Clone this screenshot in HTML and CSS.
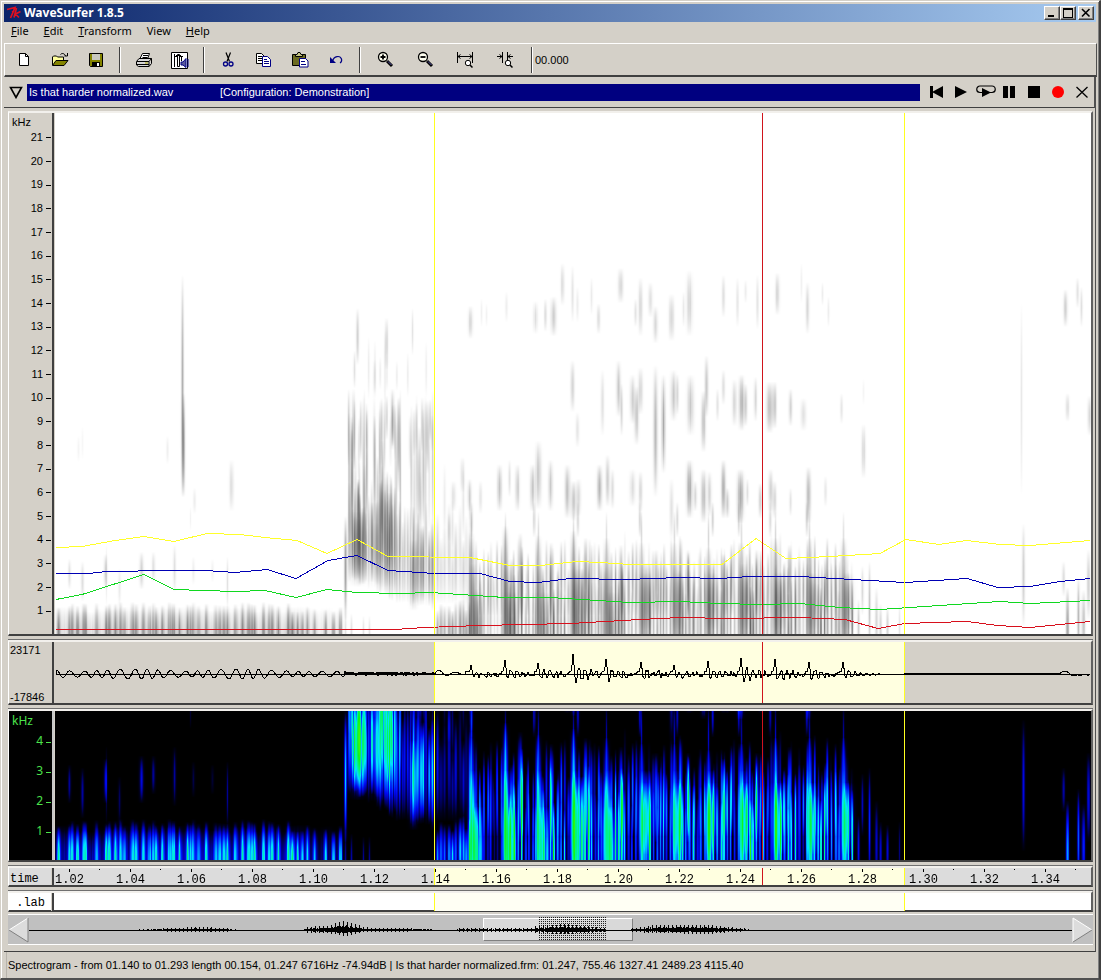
FILE: index.html
```html
<!DOCTYPE html>
<html lang="en">
<head>
<meta charset="utf-8">
<title>WaveSurfer 1.8.5</title>
<link rel="stylesheet" href="styles.css">
</head>
<body>
<div class="window">
  <header class="titlebar">
    <svg class="logo" width="16" height="14" viewBox="0 0 16 14" aria-hidden="true"><path d="M1 3.500L9 1.500L4.500 12M10.500 2L8 11.500M14.500 5.500L9.500 8L13 11.500M6 6L8 5" fill="none" stroke="#e01020" stroke-width="1.700"/></svg>
    <h1>WaveSurfer 1.8.5</h1>
    <div class="winbuttons">
      <button aria-label="Minimize"><svg width="12" height="10" viewBox="0 0 12 10"><path d="M2 7h6v2H2z"/></svg></button>
      <button aria-label="Maximize"><svg width="12" height="10" viewBox="0 0 12 10"><path d="M1 0h10v10H1zM2 2v7h8V2z" fill-rule="evenodd"/></svg></button>
      <button class="close" aria-label="Close"><svg width="12" height="10" viewBox="0 0 12 10"><path d="M2 1L9.500 8.500M9.500 1L2 8.500" fill="none" stroke="#000" stroke-width="1.600"/></svg></button>
    </div>
  </header>
  <nav class="menu">
    <button><u>F</u>ile</button><button><u>E</u>dit</button><button><u>T</u>ransform</button><button>View</button><button><u>H</u>elp</button>
  </nav>
  <div class="toolbar">
    <button aria-label="New"><svg width="20" height="20" viewBox="0 0 20 20"><path d="M5.500 3.500h6l3 3v9h-9z" fill="#fff" stroke="#000"/><path d="M11.500 3.500v3h3" fill="none" stroke="#000"/></svg></button>
    <button aria-label="Open"><svg width="20" height="20" viewBox="0 0 20 20"><path d="M2.500 15V7l1-1h3l1 1h6v3" fill="#ffff9c" stroke="#000"/><path d="M2.500 15.500L6 10.500h12l-4 5z" fill="#848400" stroke="#000"/><path d="M10.500 4.500c1-1.500 4-1.500 5 1.500M17.500 3v3h-3" fill="none" stroke="#000"/></svg></button>
    <button aria-label="Save"><svg width="20" height="20" viewBox="0 0 20 20"><path d="M3.500 3.500h13v13h-12l-1-1z" fill="#848400" stroke="#000"/><path d="M6 4h8v6H6z" fill="#c8c8c0"/><path d="M6 12h8v4H6z"/><path d="M11 13h2v3h-2z" fill="#fff"/></svg></button>
    <span class="sep"></span>
    <button aria-label="Print"><svg width="20" height="20" viewBox="0 0 20 20"><path d="M6 8.500L8.500 3.500h7L13.500 9" fill="#fff" stroke="#000"/><path d="M9 5.500h5M8.500 7.500h5" stroke="#000"/><path d="M2.500 11.500L5 8.500h12.500L15 11.500v5H4.500l-2-1.500zM15 16.500l2.500-3v-5" fill="#d8d8d8" stroke="#000"/><path d="M3 11.500h12M3 14.500h12" fill="none" stroke="#000"/><path d="M11 13h3" stroke="#aaa400"/></svg></button>
    <button aria-label="Preferences"><svg width="20" height="20" viewBox="0 0 20 20"><path d="M1.500 2.500h16v16h-16z" fill="#fff" stroke="#000"/><path d="M4.500 4v13M4 6.500h9M11.500 6v5" fill="none" stroke="#000"/><path d="M7.500 4.500h2v12h-2z" fill="#fff" stroke="#000"/><path d="M6 5.500h5" stroke="#000"/><path d="M11 12h2l3-3.500v9L13 15h-2z" fill="#5a5a9c" stroke="#000084"/><path d="M18 9v8" stroke="#000084"/></svg></button>
    <span class="sep"></span>
    <button aria-label="Cut"><svg width="20" height="20" viewBox="0 0 20 20"><path d="M8 2.500l3.500 9M12.500 2.500L9 11.500" fill="none" stroke="#000" stroke-width="1.200"/><circle cx="7.500" cy="14" r="2" fill="none" stroke="#000084" stroke-width="1.300"/><circle cx="13" cy="14" r="2" fill="none" stroke="#000084" stroke-width="1.300"/></svg></button>
    <button aria-label="Copy"><svg width="20" height="20" viewBox="0 0 20 20"><path d="M2.500 3.500h5l3 3v7h-8z" fill="#fff" stroke="#000"/><path d="M4 6.500h4M4 8.500h4M4 10.500h4" stroke="#000"/><path d="M8.500 6.500h5l3 3v7h-8z" fill="#fff" stroke="#000084"/><path d="M10 9.500h3M10 11.500h5M10 13.500h5" stroke="#000084"/></svg></button>
    <button aria-label="Paste"><svg width="20" height="20" viewBox="0 0 20 20"><path d="M2.500 4.500h13v11h-13z" fill="#6b6b21" stroke="#000"/><path d="M5.500 6.500h7v-2H11l-1-2H8l-1 2H5.500z" fill="#c6c684" stroke="#000"/><path d="M9.500 8.500h6l2.500 2.500v6H9.500z" fill="#fff" stroke="#000084"/><path d="M11 11.500h4M11 14.500h5" stroke="#000084"/></svg></button>
    <button aria-label="Undo"><svg width="20" height="20" viewBox="0 0 20 20"><path d="M4 7v6h6z" fill="#000084"/><path d="M6.500 11C8 6 14 5 15.500 9c.500 2-.500 3.500-1.500 4" fill="none" stroke="#000084" stroke-width="1.200"/></svg></button>
    <span class="sep"></span>
    <button class="wide" aria-label="Zoom in"><svg width="20" height="20" viewBox="0 0 20 20"><path d="M11 11l5 5" stroke="#000" stroke-width="3"/><path d="M12 11.500l3.500 3.500" stroke="#5a5aad"/><circle cx="7" cy="7" r="4.500" fill="#fffff0" stroke="#000" stroke-width="1.300"/><path d="M4.500 7h5M7 4.500v5" stroke="#000" stroke-width="1.800"/></svg></button>
    <button class="wide" aria-label="Zoom out"><svg width="20" height="20" viewBox="0 0 20 20"><path d="M11 11l5 5" stroke="#000" stroke-width="3"/><path d="M12 11.500l3.500 3.500" stroke="#5a5aad"/><circle cx="7" cy="7" r="4.500" fill="#fffff0" stroke="#000" stroke-width="1.300"/><path d="M4.500 7h5" stroke="#000" stroke-width="1.800"/></svg></button>
    <button class="wide" aria-label="Zoom to selection"><svg width="20" height="20" viewBox="0 0 20 20"><path d="M1.500 2v11M16.500 2v11M2 6.500h14M4.500 4.500L2 6.500 4.500 8.500M13.500 4.500L16 6.500 13.500 8.500" fill="none" stroke="#000"/><circle cx="12" cy="13" r="2.700" fill="#fff" stroke="#000"/><path d="M14 15l2.500 2.500" stroke="#000" stroke-width="1.500"/></svg></button>
    <button class="wide" aria-label="Zoom out full"><svg width="20" height="20" viewBox="0 0 20 20"><path d="M6.500 2v11M11.500 2v9M1 6.500h5M17 6.500h-5M3.500 4.500L6 6.500 3.500 8.500M14.500 4.500L12 6.500 14.500 8.500" fill="none" stroke="#000"/><circle cx="12" cy="13" r="2.700" fill="#fff" stroke="#000"/><path d="M14 15l2.500 2.500" stroke="#000" stroke-width="1.500"/></svg></button>
    <span class="sep"></span>
    <output class="clock">00.000</output>
  </div>

  <main class="sound">
    <div class="soundbar">
      <button class="disclose" aria-label="Sound menu"><svg width="14" height="13" viewBox="0 0 14 13"><path d="M1.500 1.500h11L7 11.500z" fill="none" stroke="#000" stroke-width="1.600"/></svg></button>
      <div class="soundname"><span class="file">Is that harder normalized.wav</span><span>[Configuration: Demonstration]</span></div>
      <div class="transport">
        <button aria-label="Go to start"><svg width="16" height="14" viewBox="0 0 16 14"><path d="M0 1h3v12H0zM2 7l11-6v12z"/></svg></button>
        <button aria-label="Play"><svg width="16" height="14" viewBox="0 0 16 14"><path d="M1 1l12 6-12 6z"/></svg></button>
        <button aria-label="Play loop"><svg width="20" height="14" viewBox="0 0 20 14"><path d="M6 7.500H4a3 3 0 0 1 0-6.500h12a3 3 0 0 1 0 6.500h-2" fill="none" stroke="#000" stroke-width="1.200"/><path d="M6 3l9 4.500L6 12z"/></svg></button>
        <button aria-label="Pause"><svg width="14" height="14" viewBox="0 0 14 14"><path d="M0 1h5v12H0zM7 1h5v12H7z"/></svg></button>
        <button aria-label="Stop"><svg width="14" height="14" viewBox="0 0 14 14"><path d="M1 1h12v12H1z"/></svg></button>
        <button aria-label="Record"><svg width="14" height="14" viewBox="0 0 14 14"><circle cx="7" cy="7" r="6" fill="#f00"/></svg></button>
        <button aria-label="Close sound"><svg width="14" height="14" viewBox="0 0 14 14"><path d="M1.500 2l11 10.500M12.500 2l-11 10.500" stroke="#000" stroke-width="1.300"/></svg></button>
      </div>
    </div>

    <div class="panes">
      <section class="pane spectrogram" aria-label="Spectrogram">
        <div class="axis"><span class="unit">kHz</span>
          <ol class="scale"><li>21</li><li>20</li><li>19</li><li>18</li><li>17</li><li>16</li><li>15</li><li>14</li><li>13</li><li>12</li><li>11</li><li>10</li><li>9</li><li>8</li><li>7</li><li>6</li><li>5</li><li>4</li><li>3</li><li>2</li><li>1</li></ol>
        </div>
        <div class="plot">
          <canvas id="grey" width="1036" height="521"></canvas>
          <svg class="layer" viewBox="55 113 1036 521" preserveAspectRatio="none" aria-hidden="true">
            <g class="formants" transform="translate(0 .5)">
              <polyline stroke="#ffff2a" points="56,547 82,546 115,540 144,536 174,541 207,533 240,534 265,537 297,540 327,553 357,539 388,556 470,557 510,565 540,565 577,561 600,562 630,564 722,564 756,538 786,558 830,556 880,553 906,539 939,544 967,540 1000,544 1030,545 1090,540"/>
              <polyline stroke="#0000b4" points="56,573 88,573 107,571 170,570 205,570 235,572 267,569 296,578 328,560 357,555 388,570 435,573 480,573 510,581 538,582 570,578 627,579 680,577 720,578 750,576 800,576 870,580 905,582 967,578 998,587 1030,586 1060,581 1090,578"/>
              <polyline stroke="#10d820" points="56,599 82,594 144,574 174,589 235,591 265,590 296,597 327,589 357,592 400,593 430,592 505,597 550,597 630,602 680,601 720,603 760,604 800,603 840,607 880,609 940,605 1000,601 1030,603 1090,600"/>
              <polyline stroke="#d8101c" points="56,629 395,629 425,627 480,625 570,623 640,619 680,617 730,618 800,617 845,619 878,628 905,623 967,621 998,625 1030,627 1090,621"/>
            </g>
          </svg>
          <i class="sel"></i><i class="cursor"></i>
        </div>
      </section>
      <section class="pane wave" aria-label="Waveform">
        <div class="axis range"><span>23171</span><span>-17846</span></div>
        <div class="plot"><i class="sel fill"></i><svg class="layer" viewBox="55 642 1036 60" preserveAspectRatio="none" aria-hidden="true"><path id="wave"/></svg><i class="cursor"></i></div>
      </section>
      <section class="pane colour" aria-label="Colour spectrogram">
        <div class="axis"><span class="unit">kHz</span>
          <ol class="scale"><li>4</li><li>3</li><li>2</li><li>1</li></ol>
        </div>
        <div class="plot"><canvas id="colour" width="1036" height="149"></canvas><i class="sel"></i><i class="cursor"></i></div>
      </section>
      <section class="pane ruler" aria-label="Time">
        <div class="axis">time</div>
        <div class="plot"><i class="sel fill"></i>
          <ol class="times"><li>1.02</li><li>1.04</li><li>1.06</li><li>1.08</li><li>1.10</li><li>1.12</li><li>1.14</li><li>1.16</li><li>1.18</li><li>1.20</li><li>1.22</li><li>1.24</li><li>1.26</li><li>1.28</li><li>1.30</li><li>1.32</li><li>1.34</li></ol><i class="cursor"></i>
        </div>
      </section>
      <section class="pane lab" aria-label="Transcription">
        <div class="axis">.lab</div>
        <div class="plot"><i class="sel fill"></i></div>
      </section>
    </div>
    <div class="overview">
      <button aria-label="Scroll left"><svg width="21" height="26" viewBox="0 0 21 26"><path d="M1 13L20 1v24z" fill="#dcdcdc"/><path d="M1 13L20 1" stroke="#fff"/><path d="M1 13l19 12V1" fill="none" stroke="#808080"/></svg></button>
      <div class="track">
        <i class="thumb"></i><i class="marked"></i>
        <svg class="layer" viewBox="30 916 1042 28" preserveAspectRatio="none" aria-hidden="true"><path id="mini"/></svg>
      </div>
      <button aria-label="Scroll right"><svg width="21" height="26" viewBox="0 0 21 26"><path d="M20 13L1 1v24z" fill="#dcdcdc"/><path d="M1 25V1l19 12" fill="none" stroke="#fff"/><path d="M1 25l19-12" stroke="#808080"/></svg></button>
    </div>
  </main>
  <footer class="status">Spectrogram - from 01.140 to 01.293 length 00.154, 01.247 6716Hz -74.94dB | Is that harder normalized.frm: 01.247, 755.46 1327.41 2489.23 4115.40</footer>
</div>
<script src="script.js"></script>
</body>
</html>
```

FILE: styles.css
```css
* { box-sizing: border-box; }
body { margin: 0; background: #d4d0c8; color: #000; font: 11px/14px "Liberation Sans", sans-serif; }
button { margin: 0; padding: 0; border: 0; background: none; color: inherit; font: inherit; }
svg { display: block; }
ol { list-style: none; margin: 0; padding: 0; }
.window { display: flex; flex-direction: column; min-height: 100vh; padding: 2px 2px 0 3px; border: 1px solid #d4d0c8; border-right: 2px solid #404040; border-bottom: 2px solid #505050; box-shadow: inset 1px 1px #fff, inset -1px 0 #808080; }
.titlebar { display: flex; align-items: center; height: 18px; margin: 1px 1px 0 0; padding: 0 2px; background: linear-gradient(90deg, #0a246a, #a6caf0); color: #fff; }
.titlebar h1 { flex: 1; margin: 0 0 0 2px; font: bold 12px/16px "Noto Sans", sans-serif; }
.winbuttons { display: flex; }
.winbuttons button { display: grid; place-items: center; width: 16px; height: 14px; background: #d4d0c8; border: 1px solid; border-color: #fff #404040 #404040 #fff; box-shadow: inset -1px -1px #808080; }
.winbuttons .close { margin-left: 2px; }
.menu { display: flex; gap: 15px; height: 21px; padding: 0 0 3px 7px; align-items: center; font: 11px/14px "Noto Sans", sans-serif; }
.toolbar { display: flex; align-items: center; height: 34px; padding-left: 1px; border-top: 1px solid #fff; border-left: 1px solid #fff; border-right: 1px solid #505050; border-bottom: 2px solid #404040; }
.toolbar button { display: grid; place-items: center; width: 36px; height: 28px; }
.toolbar .wide { width: 40px; }
.sep { width: 2px; height: 26px; margin: 0 5px; border-left: 1px solid #404040; border-right: 1px solid #fff; }
.clock { font-size: 11px; margin-left: -3px; }
.sound { flex: 1; display: flex; flex-direction: column; border-right: 1px solid #505050; border-bottom: 1px solid #404040; margin-right: 1px; }
.soundbar { display: flex; align-items: center; height: 31px; padding: 0 0 0 5px; border-bottom: 1px solid #404040; border-right: 1px solid #505050; }
.disclose { margin-right: 4px; }
.soundname { flex: 1; display: flex; height: 17px; padding-left: 2px; align-items: center; background: #000080; color: #fff; }
.file { width: 191px; }
.transport { display: flex; align-items: center; padding-left: 6px; }
.transport button { display: grid; place-items: center; width: 24px; height: 20px; }
.panes { flex: 1; display: flex; flex-direction: column; gap: 4px; margin: 3px 2px 0 4px; }
.pane { display: grid; grid-template-columns: 46px 1fr; border-left: 1px solid #fff; border-top: 2px solid #f2f0ec; border-right: 2px solid #606060; border-bottom: 2px solid #404040; }
.pane + .pane { outline: 1px solid #707070; outline-offset: 0; clip-path: inset(-1px 0 0 0); }
.axis { position: relative; border-right: 2px solid #404040; box-shadow: inset -1px 0 #d4d0c8; margin-right: 1px; font: 11px/12px "Liberation Sans", sans-serif; }
.unit { position: absolute; left: 3px; top: 3px; }
.scale { display: flex; flex-direction: column; height: 100%; padding: 12px 0; }
.scale li { flex: 1; display: flex; align-items: center; justify-content: flex-end; padding-right: 1px; }
.scale li::after { content: ""; width: 5px; height: 1px; margin: 2px 0 0 3px; background: currentColor; }
.plot { position: relative; }
.plot canvas, .layer { position: absolute; left: 0; top: 0; width: 100%; height: 100%; }
.formants { fill: none; stroke-width: 1px; shape-rendering: crispEdges; }
.sel { position: absolute; top: 0; bottom: 0; left: 36.6%; width: 45.4%; border: solid #ffff20; border-width: 0 1px; }
.fill { background: #ffffe0; }
.cursor { position: absolute; top: 0; bottom: 0; left: 68.2%; width: 1px; background: #d0141c; }
.spectrogram { flex: 1; min-height: 400px; }
.spectrogram .plot { background: #fff; }
.wave { height: 65px; }
.range { display: flex; flex-direction: column; justify-content: space-between; padding: 2px 0 0 1px; }
#wave, #mini { fill: none; stroke: #000; stroke-width: 1px; shape-rendering: crispEdges; }
.colour { height: 153px; }
.colour .axis, .colour .plot { background: #000; }
.colour .axis { color: #4be34b; font: 12px/14px "Noto Sans", sans-serif; box-shadow: none; border-right-color: #c8c8c8; }
.colour .scale { padding: 15px 0 14px; }
.ruler { height: 21px; background: #dcdcdc; font: 12px/14px "Liberation Mono", monospace; }
.ruler .axis, .lab .axis { font: 12px/22px "Liberation Mono", monospace; padding-left: 1px; }
.ruler .axis { height: 17px; }
.times { position: relative; display: flex; margin: 0 15px 0 -16px; }
.times li { flex: 1; height: 17px; padding-top: 5px; line-height: 14px; text-align: center; background: linear-gradient(#000, #000) 50% 1px / 1px 3px no-repeat, linear-gradient(#000, #000) 100% 1px / 1px 1px no-repeat; }
.lab { height: 21px; background: #fff; }
.lab .axis { text-align: right; padding-right: 7px; padding-top: 2px; line-height: 16px; }
.lab .fill { background: #fffff4; }
.overview { display: flex; align-items: center; height: 31px; margin: 2px 2px 6px 4px; border-top: 1px solid #fff; border-bottom: 1px solid #fff; background: #c0c0c0; }
.track { position: relative; flex: 1; align-self: stretch; }
.thumb { position: absolute; left: 43.5%; width: 14.4%; top: 3px; bottom: 3px; background: #d9d9d9; border: 1px solid; border-color: #fff #808080 #808080 #fff; }
.marked { position: absolute; left: 48.8%; width: 6.5%; top: 2px; bottom: 3px; background: conic-gradient(#222 25%, transparent 0) 0 0 / 2px 2px; }
.status { height: 26px; margin-left: 2px; padding: 6px 0 0 1px; border-left: 1px solid #b8b4ac; white-space: nowrap; }
```

FILE: script.js
```js
let seed = 7;
const rnd = () => (seed = (seed * 16807) % 2147483647) / 2147483647;

/* Energy streaks: [x, low kHz, high kHz, half width, strength] */
const streaks = [
  [182,5.8,15.2,1,.45],[183,5.8,10.2,1.2,.55],[231,5.2,7.4,1.5,.24],[194,5.1,6.2,1,.16],[167,7.2,8.4,1,.12],[78,7.3,8.4,1,.08],[82,7.4,8.8,.8,.08],[190,4.4,5.4,.6,.1],
  [470,12.5,13.9,1.6,.28],[481,13,14.2,.8,.1],[486,13,14,.8,.1],[506,13.2,14.5,1,.13],[535,12.7,14.1,1.6,.22],[545,12.8,14.2,1,.28],[553,12.6,14.3,2,.3],[562,13.9,15.7,1.3,.27],[572,13.2,15.6,1,.2],[577,13.2,14.7,1,.15],[591,13.5,15.1,1,.14],[598,12.7,14,1.3,.22],[620,14,15.5,1.8,.3],[635,13,14.2,1,.22],[640,12.6,15.1,1.4,.3],[650,13.4,14.9,1.6,.2],[655,12.3,13.9,1.6,.3],[671,12.4,14.4,1.8,.32],[683,13,14.5,1,.15],[689,12.6,15.4,2,.3],[723,13.4,15.2,1.2,.22],[737,13,15.1,1,.2],[745,14,15,1,.14],[757,12.9,15.2,.9,.22],[777,13.5,15.3,1.5,.3],[801,14,15.7,.8,.12],[807,12.7,14.9,1.3,.28],[822,13.9,14.9,.8,.14],[828,13,14.3,.8,.15],
  [1065,13,14.6,1.5,.3],[1077,13.8,15.1,1.1,.2],[1081,13,14.7,1,.22],[1021,5.9,14,.8,.16],[1067,9,10.2,1.3,.24],[1089,8.4,10.1,1.4,.28],[1023,.3,4.7,1.1,.3],
  [572,9.4,11.6,1.4,.3],[577,7.9,9.4,1.3,.2],[602,8.4,11.2,1.3,.2],[618,9.2,11.6,1.5,.4],[621,8.4,10.6,1,.28],[632,8.9,11,1.8,.32],[636,8,10.5,1.6,.36],[640,9.3,11.3,1.6,.3],[655,5.8,11.4,1.5,.5],[663,6.8,11,1.4,.5],[673,9,11.2,2,.36],[677,9.3,11,1,.26],[690,8.4,11,2.2,.36],[703,7.7,10.3,1.5,.42],[706,9.2,11.8,1.3,.36],[717,9,10.4,1,.2],[723,9.7,11.2,1.2,.22],[734,8.8,10.8,1.5,.3],[741,8.6,11,1.8,.5],[745,8.8,10.6,1.3,.32],[755,9,10.9,1.2,.26],[769,8.5,10.7,2,.48],[774,8.7,10.7,1.4,.4],[790,8.8,10.4,1.3,.3],[803,8.6,10,1.8,.25],[841,8.9,10.2,1,.22],[863,6.6,8.9,1.4,.28],[863,9.7,10.8,.7,.1],
  [462,6,7.5,1.4,.22],[453,5.2,6.5,1.6,.22],[469,5.2,6.6,1.6,.2],[480,5.1,6.5,1.2,.18],[499,5.2,7.2,1.6,.4],[509,5.8,7.4,1,.2],[517,5.2,7.2,1.5,.35],[532,5.2,7.2,1.7,.36],[538,5.3,8.2,2,.36],[550,5.2,7.4,1.6,.34],[567,4.9,7.2,1.8,.42],[573,4.8,6.5,1.7,.36],[578,5,6.6,1.6,.28],[599,5.2,7.2,1.8,.42],[607,5.4,7.6,1.4,.36],[612,5.3,7,1.2,.28],[632,5.4,7,2,.24],[640,5.2,6.9,1.3,.3],[671,4,6.6,1.3,.25],[689,4.9,7.4,2,.55],[695,5.2,6.5,1.3,.24],[703,4.7,7,1.7,.44],[709,5,6.9,1.5,.26],[723,4.9,7.4,1.6,.48],[727,4.9,6.2,1.2,.35],[740,4.7,7,2.2,.58],[747,5.4,6.6,1,.2],[760,4.9,6.4,1.4,.3],[770,5.2,7,1.5,.34],[774,4.9,6.5,1.3,.3],[790,5,6.2,1,.2],[808,4.7,7.1,1.6,.46],[825,5.4,6.7,1,.2],
  [69,1.9,3.2,1.1,.22],[82,1.4,3.1,1.1,.26],[105,1.9,3.4,1.3,.27],[106,1.2,3.8,.6,.15],[119,1.2,2.8,1,.17],[141,1.9,3.5,1.5,.3],[153,2.2,3.5,1.2,.24],[174,1.8,3.8,1.1,.2],[193,2.1,3.3,1,.14],[212,2.2,3.2,1,.11],[227,1.1,3.3,.8,.2],
  [345,.6,5,1,.55],[345,-1,1,.8,.2],[351,-1,.9,.8,.25],[363,-1,.8,.8,.2],[369,-1,.8,.8,.2],
  [869,-.8,3.1,.9,.4],[876,-1,2,1.1,.28],[880,-.8,1.3,1,.32],[887,-.6,1.2,.9,.32],[899,-.6,1.3,.7,.22],[862,.8,2.9,1,.25],[858,-.8,1.5,1,.3],
  [1063,1.6,3.1,1.1,.25],[1067,-1.6,2,1.1,.6],[1078,-1,2.4,1,.42],[1083,-1,1.9,1.3,.42],[1088,.6,3.6,1.2,.35]
];
const add = (...s) => streaks.push(s);
const pick = (a, b) => a + (b - a) * rnd();

/* Voice bar */
for (const x of [58,69,72,77,83,85,96,106,109,115,120,124,132,136,143,149,153,156,162,169,173,179,187,190,193,198,206,215,219,223,227,235,242,248,251,254,263,269,272,278,288,292,297,302,307,314,325,333,340])
  add(x, -1.1, (x < 290 ? 1.15 : .95) + pick(0, .25), 1.3, pick(.48, .66));
for (let x = 58; x < 340; x += 5) add(x, -1.1, pick(.95, 1.2), 3, x < 300 ? .17 : .1);

/* Fricative */
for (let x = 349; x < 433; x += pick(1.8, 3.2)) {
  const dip = (x > 367 && x < 372) || (x > 402 && x < 408);
  const low = x < 366 ? 2.1 : x < 400 ? 1.8 - (x - 366) / 60 : 1.1;
  const core = x < 366 || (x > 379 && x < 394);
  add(x, low + pick(0, .3), x > 402 ? pick(4.4, 5.6) : pick(5, 6.6), .9, pick(.3, .66) * (dip ? .6 : core ? 1.1 : .95));
  if (!dip) {
    add(x + pick(-1, 1), pick(3, 5), pick(6.5, 10.4), pick(.6, 1), pick(.2, .55) * (x > 402 ? .7 : 1));
    if (rnd() > .4) add(x + pick(-1, 1), pick(6.5, 8.5), pick(9, 10.4), .9, pick(.15, .35));
  }
  if (rnd() > .65) add(x, pick(9, 10.5), pick(11.5, 13), .8, .13);
}
add(357, 2, 5.2, 5, .45); add(355, 2.3, 5, 1.4, .45); add(364, 3, 7.2, 1, .4); add(352, 3.5, 9, 1, .4); add(353, 7, 10.4, 1.2, .35);
add(357, 11.4, 13.8, 1.1, .3); add(354, 10.4, 12, 1, .2); add(374, 10, 11.6, 1, .18); add(382, 3, 8.2, 1.4, .5); add(389, 2.6, 6, 2, .5);
add(392, 7.8, 10.4, 1.3, .4); add(386, 11.2, 13.4, 1.2, .3); add(398, 6, 10, 1, .4); add(412, 11.8, 13.8, .8, .18); add(372, 2.2, 5.6, 1.6, .55);
add(377, 2.1, 5.6, 1.5, .45); add(386, 2, 6.4, 6, .22); add(432, 1, 4.7, 1.1, .5); add(419, 4.8, 8.8, 1.4, .35); add(427, 6.8, 9.9, 1.1, .3); add(413, 1, 4, 2.4, .45); add(422, 1.4, 4.6, 2, .4);

for (let x = 437; x < 470; x += pick(3, 4.6)) {
  add(x, -.9, pick(1, 1.5), 1.2, pick(.4, .62));
  add(x, 1.3, pick(3.4, 5.6), 1.2, pick(.16, .36));
  if (rnd() > .4) add(x, pick(3, 4.5), pick(5, 7.5), 1, .16);
}

/* Glottal pulses: [x, top kHz, strength] */
const pulses = [[471,4.3,.82],[505,4.6,.88],[538,4.2,.8],[573,4.4,.95],[606,4.1,.87],[641,3.9,.8],[674,3.9,.82],[708,3.7,.85],[741,3.9,.92],[775,4.1,.94],[809,4.1,.88],[843,4.1,.85]];
pulses.forEach(([p, top, a], k) => {
  add(p, -1.4, top, 1.9, a * .8);
  add(p + 2, -1.6, k > 8 ? 2.6 : 3, 2.4, a * .52);
  if (k < 5) add(p + 5, -1.5, k === 3 ? 2.8 : 1.8, 5, .5);
  if (k > 4) add(p + 4, .2, 2.6, 4, .3);
  add(p, 3, 5.2, .7, .25);
  for (let d = 5; d < 32 && p + d < 854; d += pick(2.8, 4.2)) {
    const fall = d < 17 ? 1.06 : d < 26 ? .82 : .62;
    const early = k === 0 && d > 8 ? .5 : k === 2 || k === 1 ? .88 : 1;
    add(p + d, -1.5, pick(1.7, 3.2) * (k > 10 ? .85 : 1), pick(.7, 1.1), Math.min(.82, pick(.45, .86) * fall * early));
    add(p + d + pick(-1, 1), .8, pick(2.8, 4.5), pick(.7, 1), pick(.15, .52) * (k > 10 ? .5 : 1));
  }
  if (k > 0 && k < 10) add(p + pick(12, 16), .6, top - .3, 1.3, .55);
  if (rnd() > .4) add(p + pick(-8, 12), 4.1, 5.6, 1, .28);
});

const ramp = [[0,0,0,0],[.07,0,0,30],[.17,0,0,130],[.3,0,10,245],[.42,0,100,255],[.54,0,225,255],[.66,0,245,140],[.78,15,245,20],[.92,120,250,0],[1,230,240,0]];
const heat = v => {
  let i = 1;
  while (i < ramp.length - 1 && v > ramp[i][0]) i++;
  const a = ramp[i - 1], b = ramp[i], t = (v - a[0]) / (b[0] - a[0]);
  return [1, 2, 3].map(n => a[n] + (b[n] - a[n]) * t);
};
const ink = v => { const g = 255 - 195 * Math.pow(v, 1.15); return [g, g, g]; };
const grain = Array.from({ length: 1036 }, () => pick(.72, 1));

function paint(id, perKhz, colour) {
  const c = document.getElementById(id), w = c.width, h = c.height;
  const field = new Float32Array(w * h).fill(1);
  for (const [x, lo, hi, half, a] of streaks) {
    const y0 = Math.max(0, Math.floor(h - hi * perKhz)), y1 = Math.min(h - 1, Math.ceil(h - lo * perKhz));
    const cx = x - 55;
    for (let y = y0; y <= y1; y++) {
      const t = ((h - y) / perKhz - lo) / (hi - lo);
      if (t <= 0 || t >= 1) continue;
      const e = a * Math.pow(Math.sin(Math.PI * t), .8);
      for (let px = Math.max(0, Math.floor(cx - half * 3)); px <= Math.min(w - 1, cx + half * 3); px++)
        field[y * w + px] *= 1 - e * Math.exp(-((px - cx) ** 2) / (2 * half * half));
    }
  }
  const ctx = c.getContext('2d'), img = ctx.createImageData(w, h);
  for (let i = 0; i < w * h; i++) {
    const v = 1 - field[i];
    img.data.set(colour(v * grain[i % w]), i * 4);
    img.data[i * 4 + 3] = 255;
  }
  ctx.putImageData(img, 0, 0);
}
paint('grey', 23.65, ink);
paint('colour', 30, heat);

/* Waveform */
const heights = [8,13,10,19,14,11,8,12,15,14,11,11];
let d = 'M56 673';
for (let x = 57; x < 1090; x++) {
  let y;
  if (x < 345) y = Math.sin((x - 55) / 12.6 * 6.28 + Math.sin(x / 8) * .8) * (x < 290 ? 4 + Math.sin(x / 17) : 2.6) - .5;
  else if (x < 435) y = (x % 2 ? 1 : -1) * pick(.4, 2.2);
  else if (x < 466) y = Math.sin((x - 435) / 2.6) * 4 * Math.exp(-(x - 435) / 20);
  else if (x < 905) {
    let k = 0;
    pulses.forEach((p, i) => { if (x >= p[0] - 3) k = i; });
    const t = x - pulses[k][0], hgt = heights[k];
    if (t === 0) y = hgt;
    else if (Math.abs(t) === 1) y = hgt * .45;
    else if (t < 0) y = 2;
    else y = -Math.cos((t - 3) * 1.05) * (hgt * .48) * Math.exp(-t / 15) - .8 + pick(-2.6, 2.4) * Math.exp(-Math.max(0, x - 843) / 14);
  } else y = x > 1060 ? (x < 1070 ? Math.sin((x - 1060) / 3) * 2.5 : -1.5 + pick(-1, 1)) : 0;
  d += `L${x} ${(673 - y).toFixed(1)}`;
}
document.getElementById('wave').setAttribute('d', d + 'M56 673.5H1090');

/* Whole-file overview: [from, to, amplitude at start, amplitude at end] */
let m = 'M30 930.5H1072';
for (const [a, b, s, e] of [[137,165,1,1.5],[165,215,2,3],[215,238,2.5,1],[305,328,3,4],[328,345,4,9],[345,362,9,4],[362,435,2.6,1],[458,536,1.6,1.6],[536,570,4,6],[570,605,5,2],[630,650,1.5,4],[650,715,4.5,5],[715,750,4,1]])
  for (let x = a; x < b; x++) {
    const k = s + (e - s) * (x - a) / (b - a), r = (x % 4 === 0 ? 1 : pick(.3, .6)) * k;
    m += `M${x + .5} ${(930.5 - r).toFixed(1)}V${(931 + r * .6).toFixed(1)}`;
  }
document.getElementById('mini').setAttribute('d', m);
```
